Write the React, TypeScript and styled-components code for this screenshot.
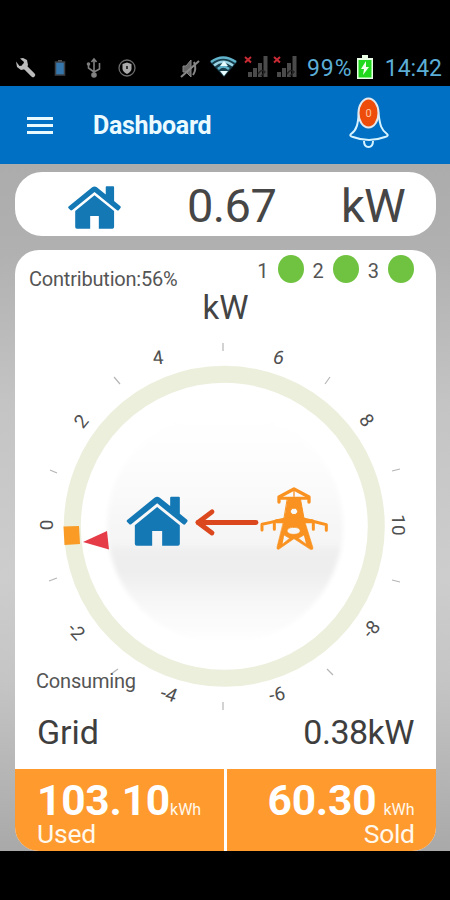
import React from "react";
import styled, { createGlobalStyle } from "styled-components";

const GlobalStyle = createGlobalStyle`
  *, *::before, *::after { box-sizing: border-box; }
  body { margin: 0; background: #000; }
`;

const Screen = styled.main`
  display: flex;
  flex-direction: column;
  width: 450px;
  height: 900px;
  overflow: hidden;
  background: #000;
  color: #464646;
  font-family: Roboto, "Liberation Sans", sans-serif;
`;

const StatusBar = styled.header`
  display: flex;
  align-items: flex-end;
  height: 86px;
  padding: 0 8px 1px 15px;
`;

const StatusIcons = styled.svg`
  flex: none;
  width: 292px;
  height: 36px;
  margin-bottom: 1px;
`;

const StatusText = styled.span<{ $spacing?: number }>`
  color: #5caed6;
  font-size: 23px;
  line-height: 32px;
  white-space: nowrap;
  letter-spacing: ${(p) => p.$spacing ?? 0}px;
`;

const Battery = styled.svg`
  flex: none;
  width: 16px;
  height: 24px;
  margin: 0 auto 6px 5px;
`;

const AppBar = styled.nav`
  display: flex;
  align-items: center;
  flex: none;
  height: 78px;
  padding: 0 61px 0 27px;
  background: #0070c4;
`;

const MenuButton = styled.button`
  display: flex;
  flex-direction: column;
  gap: 4px;
  width: 26px;
  padding: 0;
  border: 0;
  background: none;
`;

const MenuLine = styled.span`
  height: 3px;
  background: #e8faff;
`;

const Title = styled.h1`
  flex: 1;
  margin: 2px 0 0 40px;
  color: #ebfaff;
  font-size: 25px;
  font-weight: 700;
  line-height: 30px;
  letter-spacing: -0.3px;
`;

const Bell = styled.svg`
  width: 40px;
  height: 54px;
  margin-bottom: 4px;
`;

const Body = styled.section`
  display: flex;
  flex-direction: column;
  flex: none;
  gap: 14px;
  height: 687px;
  padding: 8px 14px 0 15px;
  background: linear-gradient(#acacac 0%, #b0b0b0 12%, #c4c4c4 35%, #cdcdcd 60%, #c5c5c5 75%, #a9a9a9 100%);
`;

const PowerCard = styled.article`
  display: grid;
  grid-template-columns: 172px 1fr 95px;
  align-items: center;
  flex: none;
  height: 64px;
  border-radius: 27px;
  background: #fff;
`;

const PowerIcon = styled.svg`
  width: 53px;
  height: 43px;
  margin: 4px 0 0 53px;
`;

const PowerText = styled.span<{ $spacing?: number }>`
  font-size: 47px;
  line-height: 64px;
  margin-top: 2px;
  white-space: nowrap;
  letter-spacing: ${(p) => p.$spacing ?? 0}px;
`;

const MainCard = styled.article`
  display: flex;
  flex-direction: column;
  flex: none;
  height: 601px;
  border-radius: 24px;
  overflow: hidden;
  background: #fff;
`;

const CardTop = styled.div`
  display: flex;
  justify-content: space-between;
  height: 40px;
  padding: 0 22px 0 14px;
`;

const Caption = styled.span<{ $top?: number; $spacing?: number }>`
  font-size: 20px;
  line-height: 24px;
  color: #555;
  padding-top: ${(p) => p.$top ?? 0}px;
  letter-spacing: ${(p) => p.$spacing ?? 0}px;
`;

const Phases = styled.div`
  display: flex;
  gap: 9px;
  padding-top: 5px;
`;

const Phase = styled.div`
  display: flex;
  gap: 9px;
  align-items: center;
  height: 28px;
`;

const Dot = styled.span`
  width: 26px;
  height: 28px;
  border-radius: 50%;
  background: #70c340;
`;

const Unit = styled.div`
  height: 37px;
  color: #444;
  font-size: 33px;
  line-height: 35px;
  text-align: center;
`;

const Gauge = styled.svg`
  display: block;
  flex: none;
  width: 421px;
  height: 393px;
  overflow: visible;
  font-family: Roboto, sans-serif;
`;

const GridRow = styled.div`
  display: flex;
  align-items: center;
  justify-content: space-between;
  height: 49px;
  padding: 0 22px;
  color: #3e3e3e;
  font-size: 34px;
  line-height: 40px;
`;

const Value = styled.span<{ $spacing: number }>`
  padding-bottom: 26px;
  letter-spacing: ${(p) => p.$spacing}px;
`;

const Totals = styled.footer`
  display: grid;
  grid-template-columns: 209px 210px;
  gap: 2.500px;
  flex: none;
  height: 82px;
`;

const Total = styled.div<{ $right?: boolean }>`
  display: flex;
  flex-direction: column;
  align-items: ${(p) => (p.$right ? "flex-end" : "flex-start")};
  padding: ${(p) => (p.$right ? "11px 22px 0 0" : "11px 0 0 22px")};
  background: #ff9a2f;
  color: #fff8ec;
`;

const Amount = styled.div<{ $gap: number }>`
  display: flex;
  align-items: baseline;
  gap: ${(p) => p.$gap}px;
  height: 42px;
  white-space: nowrap;
`;

const AmountValue = styled.strong`
  color: #fff;
  font-size: 42.5px;
  line-height: 42px;
  font-weight: 700;
  letter-spacing: -0.2px;
`;

const AmountUnit = styled.small`
  font-size: 16px;
`;

const TotalLabel = styled.span<{ $spacing: number }>`
  font-size: 26.500px;
  line-height: 24px;
  letter-spacing: ${(p) => p.$spacing}px;
`;

function HouseShape() {
  return (
    <g fill="#1478b5">
      <path d="M2 70 84 3Q92 -2 100 3L131 28V3Q131 0 134 0H157Q160 0 160 3V51L182 69Q185 72 181 77L176 83Q173 85 169 82L92 20 15 82Q11 85 8 82L2 76Q-1 73 2 70Z" />
      <path d="M92 31 160 86V141Q160 147 154 147H107V103H77V147H31Q25 147 25 141V86Z" />
    </g>
  );
}

const labels = [
  { text: "0", x: 46, y: 525, angle: -90 },
  { text: "2", x: 81, y: 421, angle: -50 },
  { text: "4", x: 158, y: 357, angle: 0, skew: 8 },
  { text: "6", x: 279, y: 357, angle: 10, skew: -6 },
  { text: "8", x: 367, y: 420, angle: 56 },
  { text: "10", x: 399, y: 525, angle: 90 },
  { text: "-8", x: 371, y: 629, angle: -50 },
  { text: "-6", x: 277, y: 694, angle: -12 },
  { text: "-4", x: 169, y: 694, angle: 16, skew: -6 },
  { text: "-2", x: 76.5, y: 631, angle: 48 },
];

const ticks = [
  [223, 343, 223, 351],
  [114, 377, 120, 384],
  [330, 377, 325, 384],
  [50, 470, 57, 473],
  [392, 471, 400, 469],
  [49, 581, 57, 578],
  [392, 580, 400, 582],
  [111, 674, 118, 669],
  [327, 669, 333, 675],
  [223, 702, 223, 710],
];

function Pylon() {
  return (
    <g transform="translate(250 475) scale(.33333)" stroke="#f99220" strokeLinecap="round" strokeLinejoin="round" fill="none">
      <path d="M87 81V66L132 42 177 66V81" strokeWidth="10" />
      <path d="M92 70H172" strokeWidth="9" />
      <path d="M132 47V64" strokeWidth="4" />
      <path
        fill="#f99220"
        fillRule="evenodd"
        strokeWidth="3"
        d="M113 70H151L162 130H103ZM132 99a11 10 0 1 0 .1 0Z"
      />
      <path d="M103 132H162L189 219Q189 225 181 223L132 191 86 223Q79 224 81 217ZM131 157c-26 0-26 21 0 21s26-21 0-21ZM97 208 119 190 102 180ZM169 208 145 190 162 180Z" fill="#f99220" fillRule="evenodd" strokeWidth="2" />
      <path d="M36 165V148Q58 144 82 137L106 132H160L186 138Q210 144 229 149V166" strokeWidth="9" />
      <path d="M73 144V163M190 144V163" strokeWidth="9" />
      <path d="M80 139H186" strokeWidth="12" />
    </g>
  );
}

function PowerGauge() {
  return (
    <Gauge viewBox="15 327 421 393">
      <defs>
        <linearGradient id="disc" x1="0" y1="0" x2="0" y2="1">
          <stop offset="0" stopColor="#fff" />
          <stop offset=".22" stopColor="#fdfdfd" />
          <stop offset=".57" stopColor="#f5f5f5" />
          <stop offset=".61" stopColor="#efefef" />
          <stop offset=".69" stopColor="#eeeeee" />
          <stop offset=".82" stopColor="#f7f7f7" />
          <stop offset="1" stopColor="#fff" />
        </linearGradient>
        <filter id="soft" x="-5%" y="-5%" width="110%" height="110%">
          <feGaussianBlur stdDeviation="2" />
        </filter>
      </defs>
      <circle cx="225" cy="526" r="118" fill="url(#disc)" filter="url(#soft)" />
      <circle cx="224.3" cy="526.3" r="152" fill="none" stroke="#ebefdc" strokeWidth="17" />
      {ticks.map(([x1, y1, x2, y2], i) => (
        <path key={i} d={`M${x1} ${y1}L${x2} ${y2}`} stroke="#b5b5b5" strokeWidth="1.2" />
      ))}
      {labels.map((l) => (
        <text
          key={l.text}
          transform={`translate(${l.x} ${l.y}) rotate(${l.angle}) skewX(${l.skew ?? 0})`}
          y="6.8"
          fontSize="19"
          fill="#505050"
          textAnchor="middle"
        >
          {l.text}
        </text>
      ))}
      <path d="M63.500 526.5 79 526 80 544 64.500 545Z" fill="#f99b24" />
      <path d="M83 542 107 531 109 549.5Z" fill="#e63c48" />
      <g transform="translate(126.500 496.700) scale(.3333)">
        <HouseShape />
      </g>
      <g fill="none" stroke="#dc481e" strokeWidth="4.8" strokeLinecap="round" strokeLinejoin="round">
        <path d="M198 522.5H256" />
        <path d="M212 511.8 198 522.5 212 533" />
      </g>
      <Pylon />
      <text x="36" y="687.500" fontSize="20" fill="#555" textLength="100">Consuming</text>
    </Gauge>
  );
}

function SystemIcons() {
  return (
    <StatusIcons viewBox="15 48 292 36">
      <path d="M24 66 33 75" stroke="#bcbcbc" strokeWidth="4.500" strokeLinecap="round" />
      <path d="M16 61.500 17 67 21 70 26 69 28 65 27 60 23 58 20 58.500 24 62 23 65.500 19.500 66Z" fill="#bcbcbc" />
      <path d="M58 61H62" stroke="#555" strokeWidth="2" />
      <rect x="55.500" y="62" width="9" height="13" fill="#3577ad" stroke="#3c4248" strokeWidth="1.500" />
      <g fill="none" stroke="#808080" strokeWidth="1.600">
        <path d="M94 60V75M88.500 64V68L94 72 99.500 69V63M91.500 62 94 59 96.500 62" />
        <circle cx="94" cy="75" r="2" fill="#858585" />
        <circle cx="88.500" cy="64" r="1" />
      </g>
      <circle cx="127" cy="68" r="8" fill="none" stroke="#6c6c6c" strokeWidth="1.300" />
      <path d="M127 62.500 131.500 64V69Q131 72 127 74 123 72 122.500 69V64Z" fill="#aaa" />
      <path d="M127 66V69" stroke="#333" strokeWidth="2" />
      <path d="M183 66H186L191 60V77L186 72H183Z" fill="#686868" stroke="#888" />
      <path d="M194 62Q197 69 193 75M181 77 199 61" fill="none" stroke="#888" strokeWidth="2" />
      <path d="M210 62Q223 52 237 62L224 77Z" fill="#173d4b" />
      <g fill="none" strokeWidth="2.600">
        <path d="M211 62Q223 53 236 62" stroke="#62b4cd" />
        <path d="M214 65.500Q223 58 233 65.500" stroke="#99d3e3" />
        <path d="M218 69Q223 64 229 69" stroke="#62b4cd" />
      </g>
      <path d="M220 71 224 76 228 71ZM220 66 224 61 228 66Z" fill="#e7fcff" />
      {[0, 29].map((dx) => (
        <g key={dx} transform={`translate(${dx} 0)`}>
          <path d="M250 77V72M255 77V68M260 77V63M265.500 77V56" stroke="#4b4b4b" strokeWidth="4" />
          <path d="M258 74Q262 68 265 72L261 76" fill="none" stroke="#242424" strokeWidth="1.500" />
          <path d="M245 57 251 62.500M251 57 245 62.500" stroke="#c92b34" strokeWidth="2" />
        </g>
      ))}
    </StatusIcons>
  );
}

export default function App() {
  return (
    <>
      <GlobalStyle />
      <Screen>
        <StatusBar>
          <SystemIcons />
          <StatusText $spacing={0.9}>99%</StatusText>
          <Battery viewBox="0 0 16 24">
            <path d="M5 0H11V3H16V24H0V3H5Z" fill="#e8ffe5" />
            <path d="M1.500 5H14.500V22.500H1.500Z" fill="#20d81c" />
            <path d="M9 6 4 14H7L6 20 12 12H9Z" fill="#efffec" />
          </Battery>
          <StatusText>14:42</StatusText>
        </StatusBar>
        <AppBar>
          <MenuButton aria-label="Menu">
            <MenuLine />
            <MenuLine />
            <MenuLine />
          </MenuButton>
          <Title>Dashboard</Title>
          <Bell viewBox="0 0 40 54">
            <path
              d="M10 15C9 28 8 34 2 38Q0 40 4 41Q20 47 36 41Q40 40 38 38C31 33 31 27 29 15"
              fill="none"
              stroke="#d7f3ff"
              strokeWidth="2"
            />
            <path d="M15 45Q15 51 19.500 51T24 45" fill="none" stroke="#d7f3ff" strokeWidth="2" />
            <ellipse cx="19.500" cy="17" rx="10" ry="14.500" fill="#ee4c0b" stroke="#e3e9ee" strokeWidth="2" />
            <text x="19.500" y="21" textAnchor="middle" fontSize="11" fill="#ffc6a0">0</text>
          </Bell>
        </AppBar>
        <Body>
          <PowerCard>
            <PowerIcon viewBox="0 -1 184 149">
              <HouseShape />
            </PowerIcon>
            <PowerText $spacing={-0.6}>0.67</PowerText>
            <PowerText $spacing={-0.8}>kW</PowerText>
          </PowerCard>
          <MainCard>
            <CardTop>
              <Caption $top={17} $spacing={-0.2}>Contribution:56%</Caption>
              <Phases>
                {[1, 2, 3].map((n) => (
                  <Phase key={n}>
                    <Caption $top={3}>{n}</Caption>
                    <Dot />
                  </Phase>
                ))}
              </Phases>
            </CardTop>
            <Unit>kW</Unit>
            <PowerGauge />
            <GridRow>
              <Value $spacing={-0.1}>Grid</Value>
              <Value $spacing={-0.5}>0.38kW</Value>
            </GridRow>
            <Totals>
              <Total>
                <Amount $gap={0}>
                  <AmountValue>103.10</AmountValue>
                  <AmountUnit>kWh</AmountUnit>
                </Amount>
                <TotalLabel $spacing={-0.2}>Used</TotalLabel>
              </Total>
              <Total $right>
                <Amount $gap={7}>
                  <AmountValue>60.30</AmountValue>
                  <AmountUnit>kWh</AmountUnit>
                </Amount>
                <TotalLabel $spacing={-0.4}>Sold</TotalLabel>
              </Total>
            </Totals>
          </MainCard>
        </Body>
      </Screen>
    </>
  );
}
